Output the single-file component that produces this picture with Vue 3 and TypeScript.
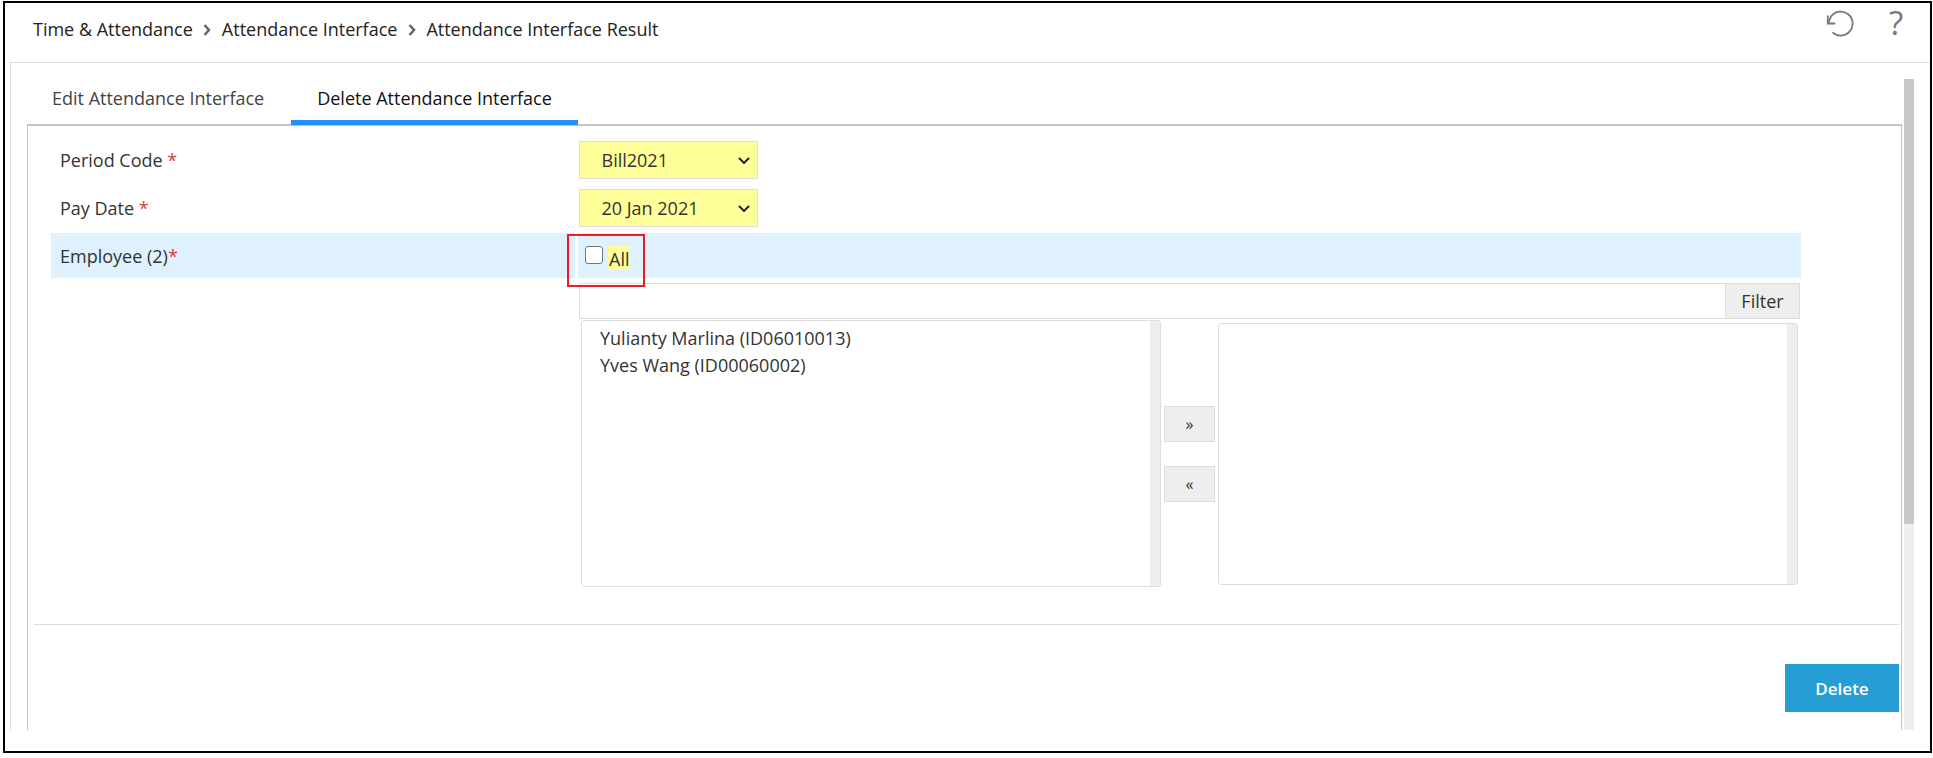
<script setup lang="ts">
const crumbs: string[] = ['Time & Attendance', 'Attendance Interface', 'Attendance Interface Result']
const employees: string[] = ['Yulianty Marlina (ID06010013)', 'Yves Wang (ID00060002)']
</script>

<template>
  <div class="frame">
    <header class="head">
      <nav class="crumbs">
        <template v-for="(c, i) in crumbs" :key="c">
          <svg v-if="i > 0" class="sep" width="8" height="12" viewBox="0 0 8 12"><path d="M1.500 1 6 6l-4.500 5" fill="none" stroke="#666" stroke-width="2.500" /></svg>
          <span>{{ c }}</span>
        </template>
      </nav>
      <div class="tools">
        <svg class="reload" width="28" height="28" viewBox="0 0 28 28"><path d="M2.500 13.500 5 7.500A12 12 0 1 1 6.500 23.400" fill="none" stroke="#777" stroke-width="1.800" /><path d="M1.800 6.500v8h7.500" fill="none" stroke="#777" stroke-width="1.800" /></svg>
        <span class="help">?</span>
      </div>
    </header>
    <section class="panel">
      <div class="main">
        <div class="tabs">
          <span class="tab">Edit Attendance Interface</span>
          <span class="tab active">Delete Attendance Interface</span>
        </div>
        <div class="body">
          <div class="form">
            <div class="row">
              <label class="label">Period Code <i>*</i></label>
              <div class="select"><select><option>Bill2021</option></select><svg width="12" height="7" viewBox="0 0 12 7"><path d="M1 1l5 5 5-5" fill="none" stroke="#222" stroke-width="2" /></svg></div>
            </div>
            <div class="row">
              <label class="label">Pay Date <i>*</i></label>
              <div class="select"><select><option>20 Jan 2021</option></select><svg width="12" height="7" viewBox="0 0 12 7"><path d="M1 1l5 5 5-5" fill="none" stroke="#222" stroke-width="2" /></svg></div>
            </div>
            <div class="row high">
              <label class="label hl">Employee (2)<i>*</i></label>
              <div class="all">
                <input type="checkbox" class="check" />
                <span class="mark">All</span>
                <div class="callout"></div>
              </div>
            </div>
            <div class="picker">
              <div class="filter">
                <input type="text" class="search" />
                <button class="filter-btn">Filter</button>
              </div>
              <div class="lists">
                <div class="list left">
                  <div class="items"><div v-for="e in employees" :key="e" class="item">{{ e }}</div></div>
                  <div class="track"></div>
                </div>
                <div class="moves">
                  <button class="move">»</button>
                  <button class="move">«</button>
                </div>
                <div class="list right">
                  <div class="items"></div>
                  <div class="track"></div>
                </div>
              </div>
            </div>
          </div>
          <hr class="rule" />
          <div class="actions"><button class="delete">Delete</button></div>
        </div>
      </div>
      <div class="scroll"><div class="thumb"></div></div>
    </section>
  </div>
</template>

<style>
body { margin: 0; background: #fff; }
</style>

<style scoped>
.frame {
  box-sizing: border-box;
  width: 1929px;
  height: 752px;
  margin: 1px 0 0 3px;
  border: 2px solid #000;
  background: #fff;
  font: 18px/24px "Open Sans", "Liberation Sans", sans-serif;
  color: #333;
}
.head {
  height: 59px;
  display: flex;
  align-items: center;
  justify-content: space-between;
  padding: 0 25px 0 28px;
  box-sizing: border-box;
}
.crumbs { display: flex; align-items: center; margin-top: -8px; color: #222; }
.sep { margin: 2px 10.500px 0; }
.tools { display: flex; align-items: center; gap: 33px; margin-top: -19px; }
.help { font-size: 33px; font-weight: 500; line-height: 36px; color: #777; width: 18px; text-align: center; }
.panel {
  height: 668px;
  margin-left: 5px;
  border-top: 1px solid #ddd;
  border-left: 1px solid #ddd;
  display: flex;
  box-sizing: border-box;
  padding-left: 16px;
  overflow: hidden;
}
.main { width: 1875px; display: flex; flex-direction: column; }
.tabs { height: 61px; display: flex; padding-left: 25px; box-sizing: border-box; gap: 53px; margin-bottom: -3px; }
.tab { display: flex; align-items: center; height: 61px; padding-top: 9px; box-sizing: border-box; color: #444; }
.tab.active {
  color: #111;
  font-weight: 500;
  padding: 13px 26px 0;
  margin-left: -26px;
  height: 62px;
  border-bottom: 5px solid #1e90ff;
  position: relative;
  z-index: 1;
}
.body {
  flex: 1;
  margin-top: 3px;
  border: 2px solid #c4c4c4;
  border-width: 2px 1px 0 1px;
  padding-left: 6px;
  padding-right: 2px;
}
.form { padding: 15px 0 0 17px; }
.row { display: flex; gap: 3px; }
.row + .row { margin-top: 10px; }
.row.high { margin-top: 6px; height: 45px; width: 1750px; }
.label { width: 524px; box-sizing: border-box; padding-left: 9px; line-height: 38px; }
.label i { color: #e53935; font-style: normal; }
.label.hl { background: #def1fd; line-height: 47px; height: 45px; }
.select { position: relative; margin-left: 1px; width: 179px; height: 38px; }
.select select {
  appearance: none;
  width: 100%;
  height: 100%;
  border: 1px solid #ddd;
  border-radius: 0;
  background: #ffff99;
  padding: 0 0 0 21.500px;
  font: inherit;
  color: #333;
}
.select svg { position: absolute; right: 8px; top: 16px; pointer-events: none; }
.all {
  flex: 1;
  background: #def1fd;
  position: relative;
  display: flex;
  align-items: flex-start;
  padding-left: 7px;
}
.check {
  appearance: none;
  margin: 13px 5px 0 0;
  width: 18px;
  height: 18px;
  border: 1.500px solid #767676;
  border-radius: 3px;
  background: #fff;
  box-sizing: border-box;
}
.mark { margin-top: 13px; background: #ffff99; height: 24px; line-height: 26px; padding: 0 1px; color: #333; }
.callout {
  position: absolute;
  left: -11px;
  top: 1px;
  width: 78px;
  height: 53px;
  box-sizing: border-box;
  border: 2px solid #ed1c24;
}
.picker { margin: 5px 0 0 528px; width: 1221px; }
.filter { display: flex; height: 36px; }
.search {
  flex: 1;
  min-width: 0;
  border: 1px solid #ddd;
  border-right: 0;
  padding: 0;
  outline: none;
  background: #fff;
}
.filter-btn {
  width: 75px;
  border: 1px solid #ddd;
  background: #eee;
  font: inherit;
  color: #333;
  padding: 0;
}
.lists { display: flex; align-items: flex-start; padding-left: 2px; margin-top: 1px; }
.list {
  box-sizing: border-box;
  display: flex;
  border: 1px solid #ddd;
  border-radius: 3px;
}
.list.left { width: 580px; height: 267px; }
.list.right { width: 580px; height: 262px; margin-top: 3px; }
.items { flex: 1; padding: 4px 0 0 18px; }
.item { line-height: 27px; color: #333; }
.track { width: 10px; background: #eee; }
.moves { width: 51px; margin: 86px 3px 0 3px; display: flex; flex-direction: column; gap: 24px; }
.move {
  height: 36px;
  border: 1px solid #ddd;
  background: #eee;
  font: inherit;
  font-size: 16px;
  color: #333;
  padding: 0;
}
.rule { border: 0; height: 1px; background: #ddd; margin: 37px 0 0; }
.actions { display: flex; justify-content: flex-end; padding-top: 39px; }
.delete {
  width: 114px;
  height: 48px;
  border: 0;
  background: #279dd6;
  color: #fff;
  font: 600 17px "Open Sans", sans-serif;
  padding: 0;
}
.scroll { width: 10px; margin: 16px 0 0 2px; background: #eee; }
.thumb { height: 445px; background: #c8c8c8; }
</style>
